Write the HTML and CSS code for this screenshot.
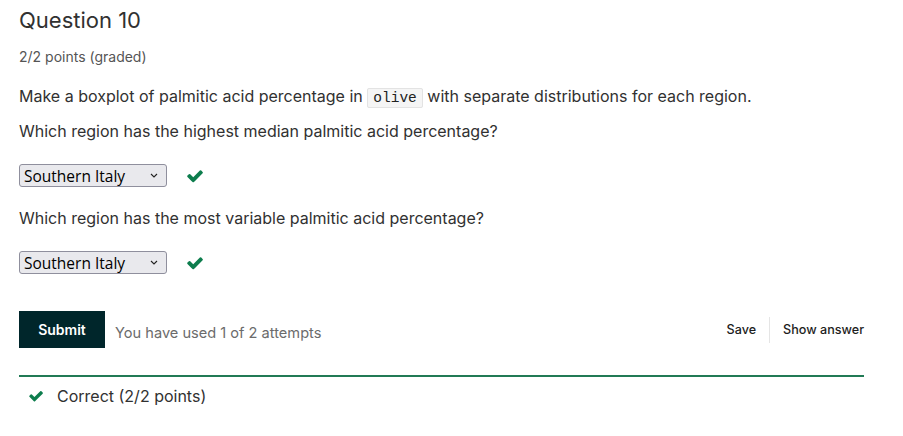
FILE: index.html
```html
<!DOCTYPE html>
<html>
<head>
<meta charset="utf-8">
<link rel="stylesheet" href="styles.css">
</head>
<body>
<div class="problem">
  <h3 class="title">Question 10</h3>
  <div class="points">2/2 points (graded)</div>
  <p class="text first">Make a boxplot of palmitic acid percentage in <code class="code">olive</code> with separate distributions for each region.</p>
  <p class="text q">Which region has the highest median palmitic acid percentage?</p>
  <div class="answer">
    <div class="selwrap">
      <select class="sel"><option>Southern Italy</option></select>
      <svg class="chev" width="8" height="5" viewBox="0 0 8 5"><path d="M1 1 L4 4 L7 1" fill="none" stroke="#222" stroke-width="1.1"/></svg>
    </div>
    <svg class="check" width="16" height="14" viewBox="100 260 1580 1280"><path fill="#0d7d4d" d="M1671 566q0 40-28 68l-724 724-136 136q-28 28-68 28t-68-28l-136-136-362-362q-28-28-28-68t28-68l136-136q28-28 68-28t68 28l294 295 656-657q28-28 68-28t68 28l136 136q28 28 28 68z"/></svg>
  </div>
  <p class="text q2">Which region has the most variable palmitic acid percentage?</p>
  <div class="answer">
    <div class="selwrap">
      <select class="sel"><option>Southern Italy</option></select>
      <svg class="chev" width="8" height="5" viewBox="0 0 8 5"><path d="M1 1 L4 4 L7 1" fill="none" stroke="#222" stroke-width="1.1"/></svg>
    </div>
    <svg class="check" width="16" height="14" viewBox="100 260 1580 1280"><path fill="#0d7d4d" d="M1671 566q0 40-28 68l-724 724-136 136q-28 28-68 28t-68-28l-136-136-362-362q-28-28-28-68t28-68l136-136q28-28 68-28t68 28l294 295 656-657q28-28 68-28t68 28l136 136q28 28 28 68z"/></svg>
  </div>
  <div class="actions">
    <div class="left">
      <button class="submit">Submit</button>
      <span class="attempts">You have used 1 of 2 attempts</span>
    </div>
    <div class="right">
      <span class="act">Save</span>
      <span class="sep"></span>
      <span class="act">Show answer</span>
    </div>
  </div>
  <div class="notice">
    <svg class="check" width="14" height="12" viewBox="100 260 1580 1280"><path fill="#0d7d4d" d="M1671 566q0 40-28 68l-724 724-136 136q-28 28-68 28t-68-28l-136-136-362-362q-28-28-28-68t28-68l136-136q28-28 68-28t68 28l294 295 656-657q28-28 68-28t68 28l136 136q28 28 28 68z"/></svg>
    <span>Correct (2/2 points)</span>
  </div>
</div>
</body>
</html>
```
FILE: styles.css
```css
body {
  margin: 0;
  background: #fff;
  font-family: Inter, "Noto Sans", sans-serif;
  color: #313131;
}
.problem {
  width: 845px;
  padding: 0 0 0 19px;
}
.title {
  margin: 0;
  padding-top: 6px;
  font-size: 22px;
  font-weight: 400;
  line-height: 28px;
  color: #313131;
}
.points {
  margin-top: 14px;
  font-size: 14px;
  line-height: 18px;
  color: #555;
}
.text {
  margin: 0;
  font-size: 16px;
  line-height: 24px;
  color: #313131;
}
.first { margin-top: 18px; }
.q { margin-top: 11px; }
.q2 { margin-top: 19px; }
.code {
  font-family: "Liberation Mono", monospace;
  font-size: 14.5px;
  line-height: 16px;
  background: #f5f5f5;
  border: 1px solid #e3e3e3;
  border-radius: 2px;
  padding: 1px 5px;
  color: #222;
}
.answer {
  display: flex;
  align-items: center;
  gap: 20px;
  margin-top: 21px;
  height: 23px;
}
.selwrap {
  position: relative;
  width: 148px;
  height: 23px;
}
.sel {
  appearance: none;
  -webkit-appearance: none;
  width: 148px;
  height: 23px;
  font-family: "Open Sans", "Noto Sans", sans-serif;
  font-size: 15.5px;
  color: #000;
  background: #e9e9ed;
  border: 1px solid #8f8f9d;
  border-radius: 3px;
  padding: 0 0 0 4px;
  margin: 0;
}
.chev {
  position: absolute;
  right: 9px;
  top: 9px;
  pointer-events: none;
}
.check { display: block; }
.actions {
  display: flex;
  justify-content: space-between;
  align-items: center;
  margin-top: 37px;
}
.left { display: flex; align-items: center; gap: 10px; }
.submit {
  background: #00262b;
  color: #fff;
  border: none;
  font-family: Inter, sans-serif;
  font-weight: 600;
  font-size: 14px;
  width: 86px;
  height: 37px;
  padding: 0;
  margin: 0;
}
.attempts {
  font-size: 14.6px;
  color: #6b6b6b;
  margin-top: 7px;
}
.right {
  display: flex;
  align-items: center;
  font-size: 12.6px;
  color: #1d1d1d;
  font-weight: 500;
}
.sep {
  width: 1px;
  height: 26px;
  background: #e5e5e5;
  margin: 0 13px;
}
.notice {
  margin-top: 27px;
  border-top: 2px solid #217a55;
  display: flex;
  align-items: center;
  gap: 14px;
  padding: 9px 0 0 10px;
  font-size: 16px;
  color: #313131;
}
```
